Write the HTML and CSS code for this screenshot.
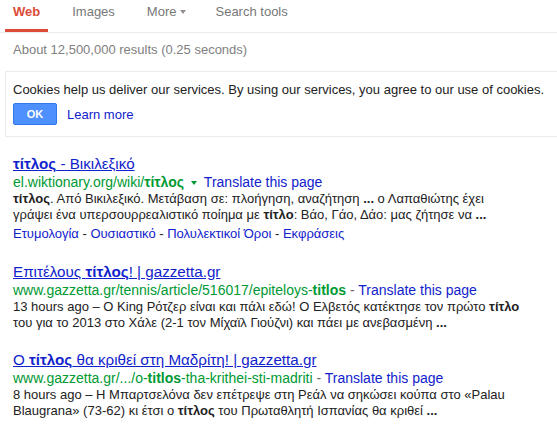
FILE: index.html
```html
<!DOCTYPE html>
<html>
<head>
<meta charset="utf-8">
<link rel="stylesheet" href="styles.css">
</head>
<body>
<div class="nav">
  <a class="tab active">Web</a>
  <a class="tab">Images</a>
  <a class="tab more">More <span class="caret"></span></a>
  <a class="tab">Search tools</a>
</div>
<div class="stats">About 12,500,000 results (0.25 seconds)</div>
<div class="cookie">
  <div class="cookie-text">Cookies help us deliver our services. By using our services, you agree to our use of cookies.</div>
  <div class="cookie-actions">
    <span class="btn">OK</span>
    <a class="learn">Learn more</a>
  </div>
</div>
<div class="results">
  <div class="result">
    <a class="title"><b>τίτλος</b> - Βικιλεξικό</a>
    <div class="url">el.wiktionary.org/wiki/<b>τίτλος</b> <span class="gcaret"></span> <a class="tr">Translate this page</a></div>
    <div class="snippet"><b>τίτλος</b>. Από Βικιλεξικό. Μετάβαση σε: πλοήγηση, αναζήτηση <b>...</b> ο Λαπαθιώτης έχει γράψει ένα υπερσουρρεαλιστικό ποίημα με <b>τίτλο</b>: Βάο, Γάο, Δάο: μας ζήτησε να <b>...</b></div>
    <div class="sitelinks"><a>Ετυμολογία</a> - <a>Ουσιαστικό</a> - <a>Πολυλεκτικοί Όροι</a> - <a>Εκφράσεις</a></div>
  </div>
  <div class="result">
    <a class="title">Επιτέλους <b>τίτλος</b>! | gazzetta.gr</a>
    <div class="url">www.gazzetta.gr/tennis/article/516017/epiteloys-<b>titlos</b> <span class="sep">-</span> <a class="tr">Translate this page</a></div>
    <div class="snippet">13 hours ago – Ο King Ρότζερ είναι και πάλι εδώ! Ο Ελβετός κατέκτησε τον πρώτο <b>τίτλο</b> του για το 2013 στο Χάλε (2-1 τον Μίχαϊλ Γιούζνι) και πάει με ανεβασμένη <b>...</b></div>
  </div>
  <div class="result">
    <a class="title">Ο <b>τίτλος</b> θα κριθεί στη Μαδρίτη! | gazzetta.gr</a>
    <div class="url">www.gazzetta.gr/.../o-<b>titlos</b>-tha-krithei-sti-madriti <span class="sep">-</span> <a class="tr">Translate this page</a></div>
    <div class="snippet">8 hours ago – Η Μπαρτσελόνα δεν επέτρεψε στη Ρεάλ να σηκώσει κούπα στο «Palau Blaugrana» (73-62) κι έτσι ο <b>τίτλος</b> του Πρωταθλητή Ισπανίας θα κριθεί <b>...</b></div>
  </div>
</div>
</body>
</html>
```

FILE: styles.css
```css
html, body {
  margin: 0;
  padding: 0;
  background: #fff;
  font-family: "Liberation Sans", Arial, sans-serif;
  font-size: 13px;
  color: #222;
}
.nav {
  display: flex;
  height: 32px;
  border-bottom: 1px solid #ebebeb;
  padding-left: 5px;
}
.tab {
  display: flex;
  align-items: center;
  padding: 0 8px 6px;
  margin-right: 16px;
  color: #777;
  font-size: 13px;
  box-sizing: border-box;
  height: 32px;
  border-bottom: 3px solid transparent;
}
.tab.active {
  color: #dd4b39;
  font-weight: bold;
  border-bottom-color: #dd4b39;
}
.tab.more {
  margin-right: 13px;
}
.caret {
  display: inline-block;
  width: 0;
  height: 0;
  border-left: 3.5px solid transparent;
  border-right: 3.5px solid transparent;
  border-top: 4px solid #909090;
  margin-left: 4px;
  margin-top: 1px;
}
.stats {
  color: #808080;
  padding: 9px 0 0 13px;
  height: 29px;
}
.cookie {
  margin-left: 5px;
  border: 1px solid #ebebeb;
  border-right: none;
  padding: 10px 0 11px 7px;
}
.cookie-text {
  line-height: 16px;
}
.cookie-actions {
  display: flex;
  align-items: center;
  margin-top: 5px;
}
.btn {
  display: inline-flex;
  align-items: center;
  justify-content: center;
  width: 44px;
  height: 22px;
  background: #4d90fe;
  border: 1px solid #3079ed;
  box-sizing: border-box;
  border-radius: 2px;
  color: #fff;
  font-weight: bold;
  font-size: 11px;
}
.learn {
  color: #1122cc;
  margin-left: 10px;
}
.results {
  padding: 17px 0 0 13px;
  width: 512px;
}
.result {
  margin-bottom: 19px;
}
.title {
  display: block;
  font-size: 15.2px;
  line-height: 19px;
  color: #1122cc;
  text-decoration: underline;
}
.url {
  color: #009933;
  font-size: 14px;
  line-height: 18px;
}
.url b {
  font-weight: bold;
}
.gcaret {
  display: inline-block;
  width: 0;
  height: 0;
  border-left: 3.5px solid transparent;
  border-right: 3.5px solid transparent;
  border-top: 4px solid #009933;
  vertical-align: middle;
  margin: 0 3px;
}
.sep {
  color: #666;
}
.tr {
  color: #1122cc;
}
.snippet {
  line-height: 16px;
}
.sitelinks {
  margin-top: 2px;
  line-height: 18px;
  color: #222;
}
.sitelinks a {
  color: #1122cc;
}
```
